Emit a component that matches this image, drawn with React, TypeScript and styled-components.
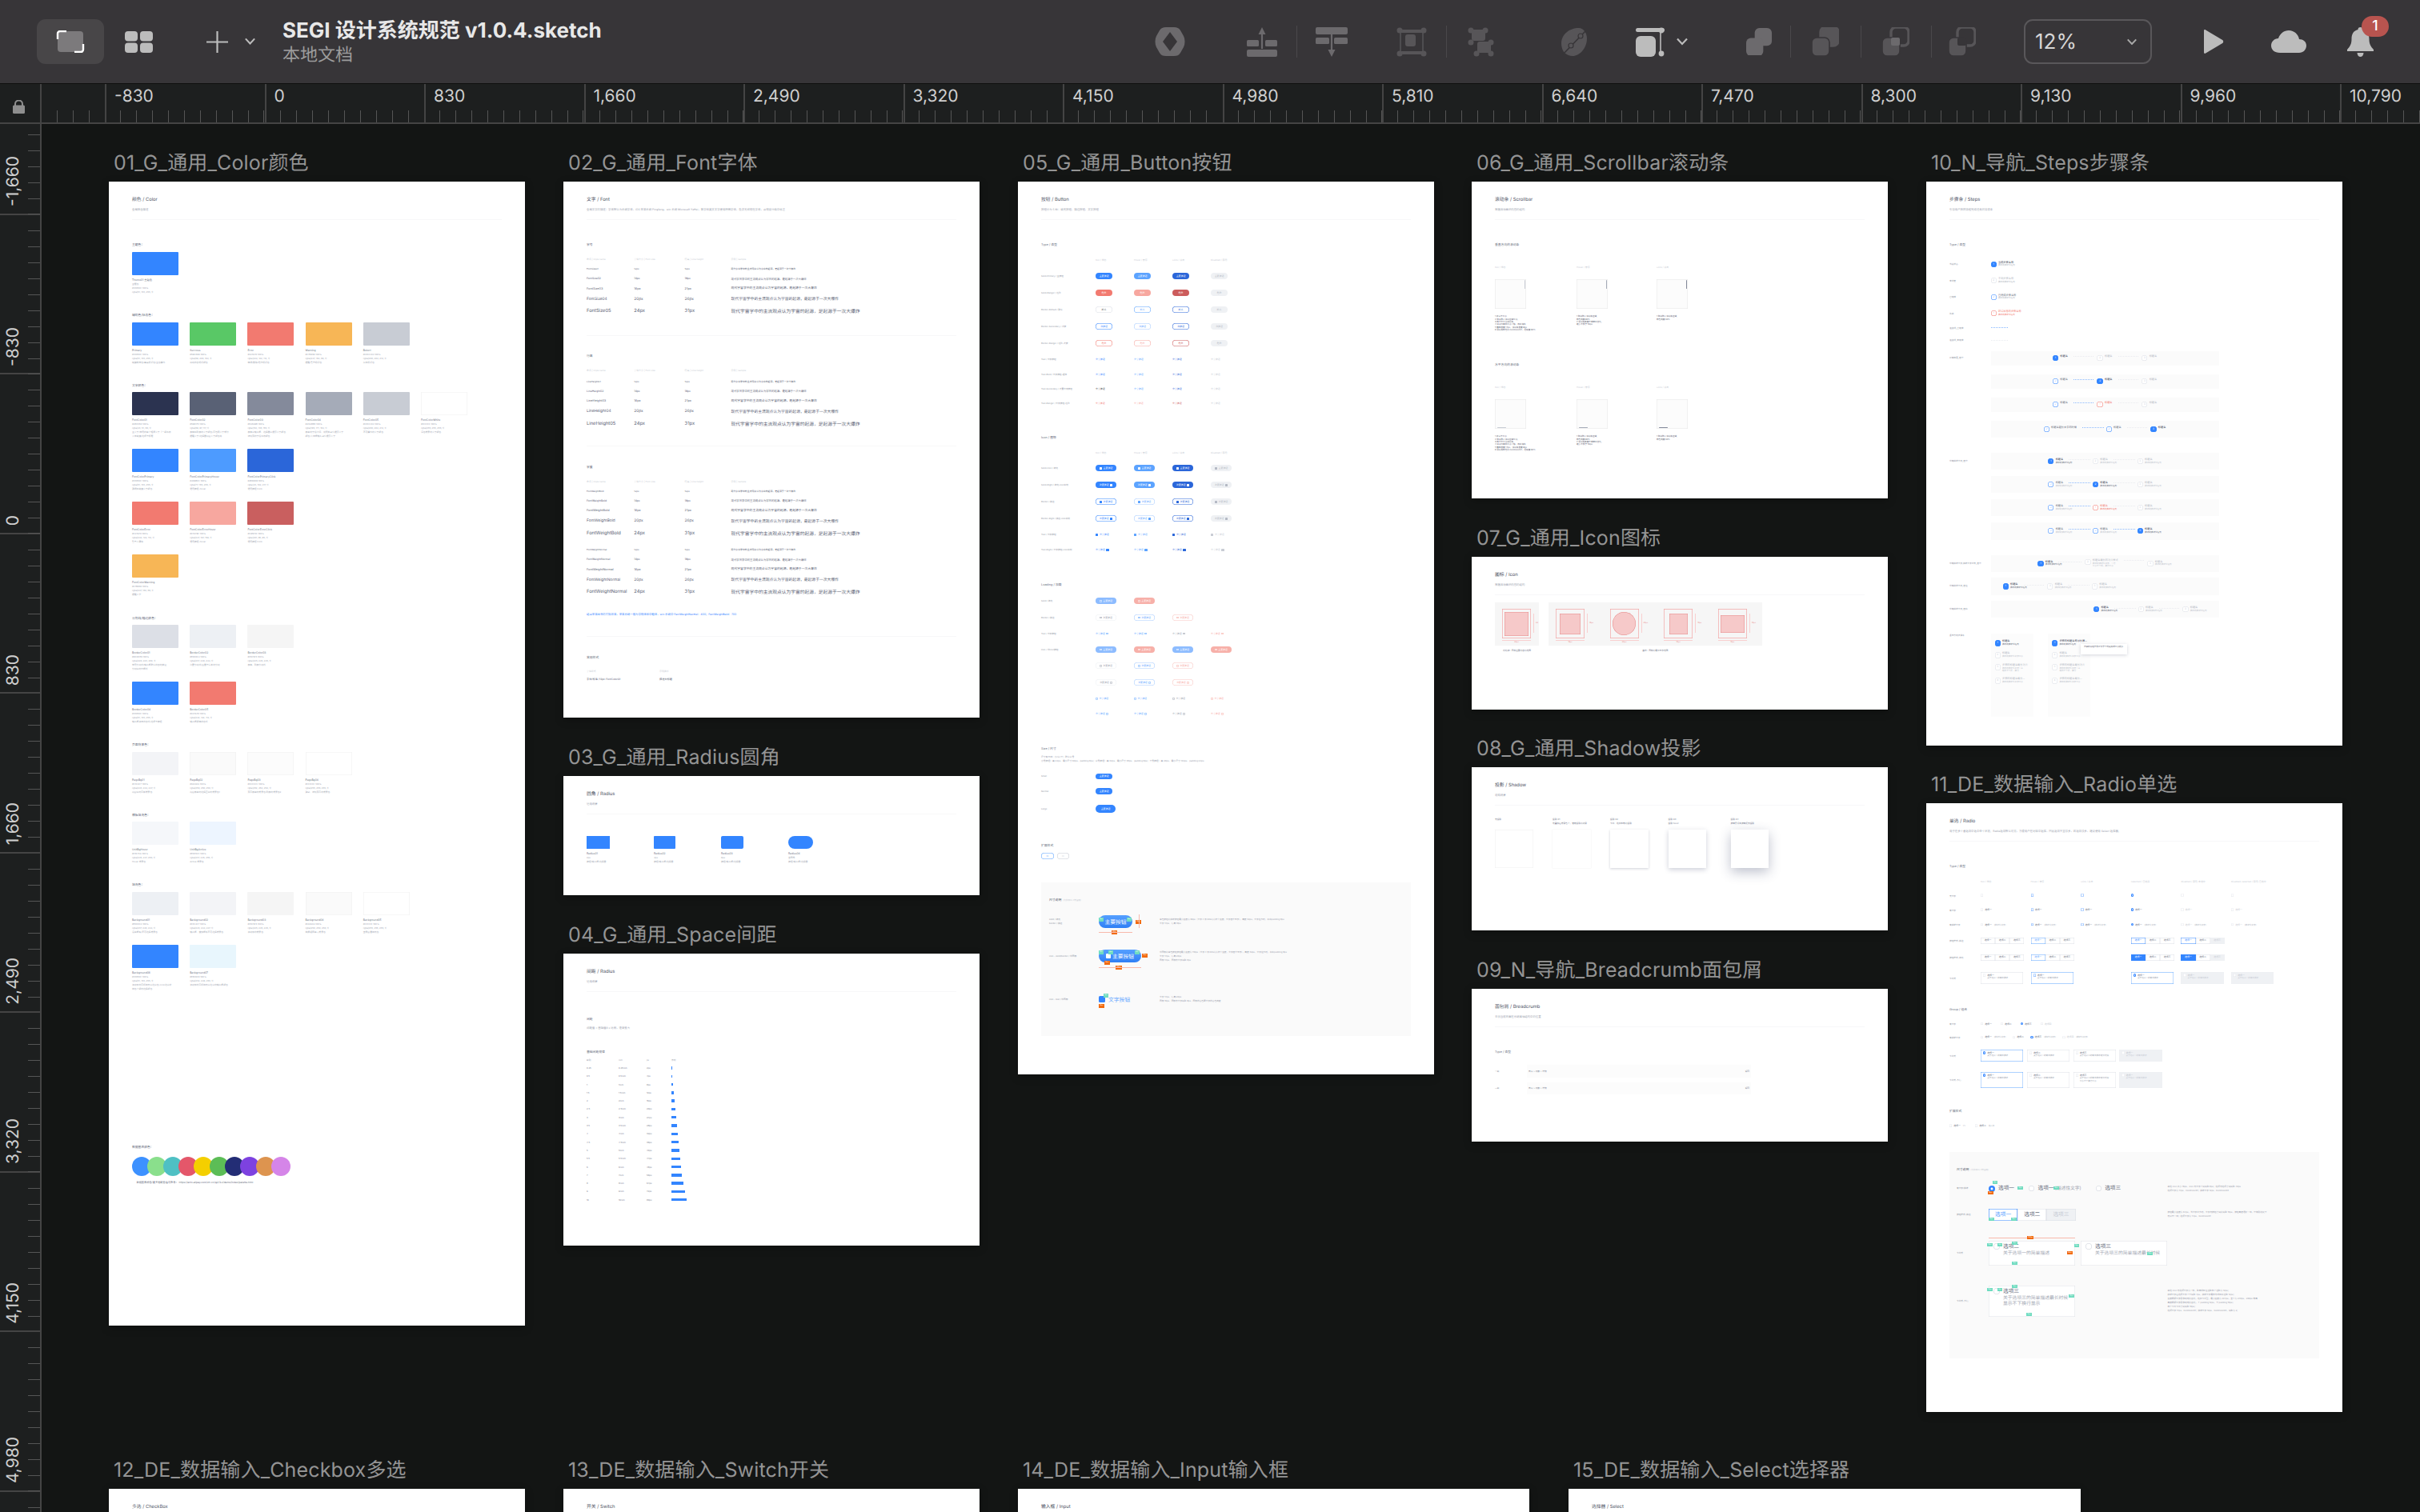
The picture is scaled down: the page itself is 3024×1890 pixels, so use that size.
import React from "react";
import styled, { createGlobalStyle } from "styled-components";

const FONT = `Inter, "Noto Sans CJK SC", "Liberation Sans", sans-serif`;
const BLUE = "#3385ff";
const BLUE_H = "#5ca3ff";
const BLUE_C = "#2b66d9";
const RED = "#f27a70";
const RED_H = "#f7a79f";
const RED_C = "#cc5c5c";
const DIS = "#eff1f4";
const TXT = "#5a6073";
const FAINT = "#c8ccd4";
const GRAY = "#9aa0ad";
const STEP = 199.5;

const Global = createGlobalStyle`
  html, body { margin: 0; width: 3024px; height: 1890px; overflow: hidden; background: #131514; }
  * { box-sizing: border-box; }
  body { font-family: ${FONT}; text-rendering: geometricPrecision; }
`;

const Win = styled.div`
  width: 3024px;
  height: 1890px;
  display: flex;
  flex-direction: column;
  overflow: hidden;
`;

/* toolbar */
const Toolbar = styled.header`
  height: 105px;
  flex: none;
  display: flex;
  align-items: center;
  background: #373538;
  border-bottom: 1px solid #0e0e0e;
  padding: 0 58px 0 46px;
`;

const ActiveBtn = styled.div`
  width: 84px;
  height: 56px;
  border-radius: 11px;
  background: #484648;
  display: flex;
  align-items: center;
  justify-content: center;
  svg { width: 36px; }
`;

const Tool = styled.span<{ $ml: number; $w: number }>`
  flex: none;
  margin-left: ${({ $ml }) => $ml}px;
  width: ${({ $w }) => $w}px;
  display: flex;
  position: relative;
  svg { display: block; width: 100%; height: auto; }
`;

const Sep = styled.i<{ $ml: number }>`
  flex: none;
  width: 1px;
  height: 40px;
  margin-left: ${({ $ml }) => $ml}px;
  background: #4a484b;
`;

const DocName = styled.div`
  flex: 1;
  margin-left: 33px;
  min-width: 0;
  padding-top: 2px;
`;

const DocTitle = styled.div`
  font-size: 26px;
  line-height: 32px;
  font-weight: 700;
  color: #e8e8e8;
`;

const DocSub = styled.div`
  font-size: 22px;
  line-height: 28px;
  color: #9c9c9c;
`;

const ZoomBox = styled.div`
  flex: none;
  margin-left: 60px;
  width: 160px;
  height: 56px;
  border: 2px solid #59575a;
  border-radius: 11px;
  display: flex;
  align-items: center;
  justify-content: space-between;
  padding: 0 16px 0 12px;
  color: #d6d6d6;
  font-size: 26px;
`;

const Badge = styled.b`
  position: absolute;
  left: 18px;
  top: -14px;
  width: 34px;
  height: 26px;
  border-radius: 13px;
  background: #b8544f;
  color: #fff;
  font-size: 18px;
  font-weight: 500;
  line-height: 26px;
  text-align: center;
`;

/* rulers */
const RulerRow = styled.div`
  height: 50px;
  flex: none;
  display: flex;
  background: #1d1f1f;
`;

const Corner = styled.div`
  width: 52px;
  flex: none;
  position: relative;
  z-index: 2;
  background: #1d1f1f;
  border-right: 2px solid #444;
  border-bottom: 2px solid #444;
  display: flex;
  align-items: center;
  justify-content: center;
  padding: 8px 4px 0 0;
  svg { width: 15px; }
`;

const TopTrack = styled.div`
  flex: 1;
  display: flex;
  overflow: hidden;
  border-bottom: 2px solid #444;
`;

const TopSeg = styled.div<{ $first?: boolean }>`
  width: ${STEP}px;
  flex: none;
  margin-left: ${({ $first }) => ($first ? -120.5 : 0)}px;
  border-left: 2px solid #444;
  position: relative;
  color: #cfcfcf;
  font-size: 21px;
  line-height: 30px;
  padding: 1px 0 0 10px;
  &::after {
    content: "";
    position: absolute;
    left: -2px;
    right: 0;
    bottom: 0;
    height: 15px;
    background: repeating-linear-gradient(to right, transparent 0 18.95px, #555 18.95px 19.95px);
  }
`;

const Body = styled.div`
  flex: 1;
  display: flex;
  min-height: 0;
`;

const LeftTrack = styled.div`
  width: 52px;
  flex: none;
  background: #1d1f1f;
  border-right: 2px solid #444;
  overflow: hidden;
`;

const LeftSeg = styled.div<{ $first?: boolean }>`
  height: ${STEP}px;
  margin-top: ${({ $first }) => ($first ? -86 : 0)}px;
  border-bottom: 2px solid #444;
  position: relative;
  &::after {
    content: "";
    position: absolute;
    right: 0;
    top: 0;
    bottom: -2px;
    width: 15px;
    background: repeating-linear-gradient(to bottom, transparent 0 18.95px, #555 18.95px 19.95px);
  }
  span {
    position: absolute;
    left: 4px;
    bottom: 8px;
    writing-mode: vertical-rl;
    transform: rotate(180deg);
    color: #cfcfcf;
    font-size: 21px;
    line-height: 26px;
  }
`;

const Canvas = styled.main`
  flex: 1;
  position: relative;
  overflow: hidden;
  background: #131514;
`;

/* artboards sit at their own spot on the free canvas */
const Frame = styled.section<{ $x: number; $top: number; $w: number }>`
  position: absolute;
  left: ${({ $x }) => $x - 52}px;
  top: ${({ $top }) => $top - 39 - 155}px;
  width: ${({ $w }) => $w}px;
`;

const BoardName = styled.div`
  height: 32px;
  margin-bottom: 7px;
  padding-left: 6px;
  font-size: 25px;
  letter-spacing: 0.15px;
  line-height: 32px;
  color: #949494;
  white-space: nowrap;
`;

const Sheet = styled.div<{ $h: number }>`
  height: ${({ $h }) => $h}px;
  background: #fff;
  padding: 0 29px;
  overflow: hidden;
  box-shadow: 0 3px 10px rgba(0, 0, 0, 0.25);
  color: ${TXT};
`;

const Heading = styled.div`
  padding-top: 19px;
  font-size: 5.8px;
  line-height: 8px;
  color: #4c5263;
  white-space: nowrap;
`;

const Desc = styled.div`
  margin-top: 5.5px;
  font-size: 3.4px;
  line-height: 5px;
  color: ${GRAY};
  white-space: nowrap;
`;

const SizeDesc = styled(Desc)`
  margin-top: 4.7px;
  font-size: 2.8px;
`;

const Rule = styled.div<{ $mt?: number }>`
  margin-top: ${({ $mt }) => $mt ?? 9.5}px;
  height: 1px;
  background: #f8f8f9;
`;

const Title = styled.div<{ $mt: number }>`
  margin-top: ${({ $mt }) => $mt}px;
  font-size: 3.8px;
  line-height: 6px;
  color: #666c7c;
  white-space: nowrap;
`;

const Head = ({ t, d }: { t: string; d: string }) => (
  <>
    <Heading>{t}</Heading>
    <Desc>{d}</Desc>
    <Rule />
  </>
);

/* 01 colour */
const SwatchRow = styled.div<{ $h: number; $mt?: number }>`
  height: ${({ $h }) => $h}px;
  margin-top: ${({ $mt }) => $mt ?? 0}px;
  display: grid;
  grid-template-columns: repeat(6, 58px);
  column-gap: 14.2px;
  align-content: start;
`;

const Swatch = styled.div<{ $c: string; $line?: boolean }>`
  height: 29px;
  border-radius: 1px;
  background: ${({ $c }) => $c};
  box-shadow: ${({ $line }) => ($line ? "inset 0 0 0 0.6px #f0f0f0" : "none")};
`;

const SwatchName = styled.div`
  margin-top: 4px;
  font-size: 3.3px;
  line-height: 5px;
  color: #6a7080;
  white-space: nowrap;
`;

const SwatchLine = styled.div`
  font-size: 2.8px;
  line-height: 5px;
  color: #a3a8b3;
  white-space: nowrap;
`;

const Dots = styled.div`
  margin-top: 9px;
  display: flex;
`;

const Dot = styled.i<{ $c: string }>`
  width: 24px;
  height: 24px;
  border-radius: 50%;
  flex: none;
  background: ${({ $c }) => $c};
  & + & { margin-left: -4.7px; }
`;

const Caption = styled.div`
  margin: 6px 0 0 5.5px;
  font-size: 3.2px;
  line-height: 5px;
  color: #666c7c;
  white-space: nowrap;
`;

type Sw = [string, string, string[], boolean?];
const swatchRows: { title?: string; tm?: number; h: number; items: Sw[] }[] = [
  { title: "主题色：", tm: 28, h: 76.6, items: [["#3385ff", "Theme01 主题色", ["主题色", "#3385FF 100%", "rgba(51, 133, 255, 1)"]]] },
  { title: "辅助色/状态色：", h: 76, items: [
    ["#3385ff", "Primary", ["#3385FF 100%", "rgba(51, 133, 255, 1)", "链接跳转色/高亮标识色/主色操作"]],
    ["#59c866", "Success", ["#59C866 100%", "rgba(89, 200, 102, 1)", "成功状态标识颜色"]],
    ["#f27a70", "Error", ["#F27A70 100%", "rgba(242, 122, 112, 1)", "错误/删除/危险标识色"]],
    ["#f7b656", "Warning", ["#F7B656 100%", "rgba(247, 182, 86, 1)", "提醒/警告标识色"]],
    ["#c8ccd4", "Belect", ["#C8CCD4 100%", "rgba(200, 204, 212, 1)", "失效标识色"]],
  ] },
  { title: "文字颜色：", h: 70.8, items: [
    ["#2b3350", "FontColor01", ["#2B3350 100%", "rgba(43, 51, 80, 1)", "主文字/常用的单个短语文字（一级名称", "文本链接/选项卡标题"]],
    ["#596175", "FontColor02", ["#596175 100%", "rgba(89, 97, 117, 1)", "表格和列表的文字颜色/面包屑文字部分", "提醒文字/选择器内容文字颜色等"]],
    ["#848a9b", "FontColor03", ["#848A9B 100%", "rgba(132, 138, 155, 1)", "表格中输入框、选择器中提示文字颜色", "详情页的字段名称颜色"]],
    ["#a5abb8", "FontColor04", ["#A5ABB8 100%", "rgba(165, 171, 184, 1)", "表单的字段介绍、说明类占位提示文字", "颜色/文本框输入占位提示文字"]],
    ["#c8ccd4", "FontColor05", ["#C8CCD4 100%", "rgba(200, 204, 212, 1)", "不可操作的文字颜色"]],
    ["#ffffff", "FontColorWhite", ["#FFFFFF 100%", "rgba(255, 255, 255, 1)", "深色背景的文字颜色"], true],
  ] },
  { h: 66, items: [
    ["#3385ff", "FontColorPrimary", ["#3385FF 100%", "rgba(51, 133, 255, 1)", "强调和链接文字颜色"]],
    ["#4d9bff", "FontColorPrimaryHover", ["#4D9BFF 100%", "rgba(77, 155, 255, 1)", "通用按钮-hover"]],
    ["#2b66d9", "FontColorPrimaryClick", ["#2B66D9 100%", "rgba(43, 102, 217, 1)", "通用按钮 Click"]],
  ] },
  { h: 66.6, items: [
    ["#f27a70", "FontColorError", ["#F27A70 100%", "rgba(242, 122, 112, 1)", "警告文案等"]],
    ["#f7a79f", "FontColorErrorHover", ["#F7A79F 100%", "rgba(247, 167, 159, 1)", "通用按钮-hover"]],
    ["#c95f5f", "FontColorErrorClick", ["#C95F5F 100%", "rgba(201, 95, 95, 1)", "通用按钮 Click"]],
  ] },
  { h: 76.4, items: [["#f7b656", "FontColorWarning", ["#F7B656 100%", "rgba(247, 182, 86, 1)", "提醒文字"]]] },
  { title: "分割线/框边颜色：", h: 70.5, items: [
    ["#dcdfe6", "BorderColor01", ["#DCDFE6 100%", "rgba(220, 223, 230, 1)", "常用分割线/输入框默认状态的描边", "分割块的外框线"]],
    ["#edf0f4", "BorderColor02", ["#EDF0F4 100%", "rgba(237, 240, 244, 1)", "次要分割线/容器卡片类的分割"]],
    ["#f5f5f5", "BorderColor03", ["#F5F5F5 100%", "rgba(245, 245, 245, 1)", "表格、列表分割线"]],
  ] },
  { h: 76.4, items: [
    ["#3385ff", "BorderColor04", ["#3385FF 100%", "rgba(51, 133, 255, 1)", "输入框点击状态线/选项卡按钮"]],
    ["#f27a70", "BorderColor05", ["#F27A70 100%", "rgba(242, 122, 112, 1)", "输入框报错状态线"]],
  ] },
  { title: "页面背景色：", h: 76, items: [
    ["#f3f4f7", "PageBg01", ["#F3F4F7 100%", "rgba(243, 244, 247, 1)", "内容块的面板背景色"]],
    ["#fafafa", "PageBg02", ["#FAFAFA 100%", "rgba(250, 250, 250, 1)", "内容表单的选择区块的背景色1"], true],
    ["#fcfcfc", "PageBg03", ["#FCFCFC 100%", "rgba(252, 252, 252, 1)", "页面表单的背景色/列表的背景色2"], true],
    ["#ffffff", "PageBg04", ["#FFFFFF 100%", "rgba(255, 255, 255, 1)", "弹窗、详情页面的背景色"], true],
  ] },
  { title: "模板填充色：", h: 76, items: [
    ["#f5f7fa", "UnitBgHover", ["#F5F7FA 100%", "rgba(245, 247, 250, 1)", "Hover 背景色"]],
    ["#edf5ff", "UnitBgActive", ["#EDF5FF 100%", "rgba(237, 245, 255, 1)", "Active 背景色"]],
  ] },
  { title: "填充色：", h: 66, items: [
    ["#edf0f4", "Background01", ["#EDF0F4 100%", "rgba(237, 240, 244, 1)", "混合框架/不可选择背景色"]],
    ["#f3f4f7", "Background02", ["#F3F4F7 100%", "rgba(243, 244, 247, 1)", "输入框、搜索框等不可选择背景色"]],
    ["#f5f5f5", "Background03", ["#F5F5F5 100%", "rgba(245, 245, 245, 1)", "滚动条的背景色"]],
    ["#fafafa", "Background04", ["#FAFAFA 100%", "rgba(250, 250, 250, 1)", "数据视图单元背景色"], true],
    ["#ffffff", "Background05", ["#FFFFFF 100%", "rgba(255, 255, 255, 1)", "全局容器填充色"], true],
  ] },
  { h: 250, items: [
    ["#3385ff", "Background06", ["#3385FF 100%", "rgba(51, 133, 255, 1)", "滚动条的面积填充中选中色 /icon选中状", "填色上级的选择颜色"]],
    ["#e8f6fd", "Background07", ["#E8F6FD 100%", "rgba(232, 246, 253, 1)", "滚动条的面积填充中选中的输入框颜色"]],
  ] },
];

const ColorSheet = () => (
  <>
    <Head t="颜色 / Color" d="全局颜色描述" />
    {swatchRows.map((r, i) => (
      <React.Fragment key={i}>
        {r.title && <Title $mt={r.tm ?? 0}>{r.title}</Title>}
        <SwatchRow $h={r.h} $mt={r.title ? 5.5 : 0}>
          {r.items.map(([c, n, ls, line]) => (
            <div key={n}>
              <Swatch $c={c} $line={line} />
              <SwatchName>{n}</SwatchName>
              {ls.map((l) => <SwatchLine key={l}>{l}</SwatchLine>)}
            </div>
          ))}
        </SwatchRow>
      </React.Fragment>
    ))}
    <Title $mt={0}>数据图表颜色：</Title>
    <Dots>
      {["#3d91ff", "#8adf8c", "#4fc0c4", "#e4576a", "#f4cf00", "#5cbd56", "#232d75", "#7d42e0", "#dd944f", "#d585e8"].map((c) => <Dot key={c} $c={c} />)}
    </Dots>
    <Caption>数据图表颜色/更多搭配色值可参考： https://antv.alipay.com/zh-cn/g2/3.x/demo/index/palette.html</Caption>
  </>
);

/* 02 font */
const FontRow = styled.div<{ $h: number; $mt?: number; $size: number; $c?: string }>`
  height: ${({ $h }) => $h}px;
  margin-top: ${({ $mt }) => $mt ?? 0}px;
  display: grid;
  grid-template-columns: 59.3px 63.3px 58px 1fr;
  align-items: center;
  font-size: ${({ $size }) => $size}px;
  color: ${({ $c }) => $c ?? TXT};
  white-space: nowrap;
`;

const Note = styled.div<{ $mt: number }>`
  margin-top: ${({ $mt }) => $mt}px;
  font-size: 3.4px;
  line-height: 5px;
  color: ${BLUE};
  white-space: nowrap;
`;

const SAMPLE = "现代宇宙学中的主流观点认为宇宙的起源，是起源于一次大爆炸";
const fontMeta: [number, number, string, number][] = [
  [2.88, 12, "12px", 16], [3.36, 12, "14px", 18], [3.84, 12, "16px", 21], [4.8, 15, "20px", 26], [5.76, 15, "24px", 31],
];

const FontHeader = ({ mt }: { mt: number }) => (
  <FontRow $h={5} $mt={mt} $size={2.9} $c={FAINT}>
    <span>命名 | Style name</span><span>字体大小 | Font size</span><span>行高 | Line height</span><span>示例 | Sample</span>
  </FontRow>
);

const FontRows = ({ name, mt, names }: { name: string; mt: number; names?: string[] }) => (
  <>
    {fontMeta.map(([s, h, px, lh], i) => (
      <FontRow key={i} $h={h} $mt={i === 0 ? mt : 0} $size={s}>
        <span>{names ? names[i] : `${name}0${i + 1}`}</span><span>{px}</span><span>{lh}px</span><span>{SAMPLE}</span>
      </FontRow>
    ))}
  </>
);

const StyleRow = styled.div<{ $mt: number; $c?: string; $size: number }>`
  margin-top: ${({ $mt }) => $mt}px;
  display: grid;
  grid-template-columns: 91px 1fr;
  font-size: ${({ $size }) => $size}px;
  line-height: 5px;
  color: ${({ $c }) => $c ?? TXT};
  white-space: nowrap;
`;

const FontSheet = () => (
  <>
    <Head t="文字 / Font" d="全局文字的描述：字体默认为系统字体，iOS 苹果系统 Pingfang，win 系统 Microsoft YaHei，数字和英文文字使用特殊字体，能求无歧视性字体，合规设计稿中标注" />
    <Title $mt={28}>字号</Title>
    <FontHeader mt={12.5} />
    <FontRows name="FontSize" mt={3.5} />
    <Rule $mt={23} />
    <Title $mt={22.4}>行高</Title>
    <FontHeader mt={12} />
    <FontRows name="LineHeight" mt={5.5} />
    <Rule $mt={20.5} />
    <Title $mt={22.5}>字重</Title>
    <FontHeader mt={12.2} />
    <FontRows name="" mt={3.8} names={Array(5).fill("FontWeightBold")} />
    <FontRows name="" mt={7.4} names={Array(5).fill("FontWeightNormal")} />
    <Note $mt={19}>结合苹果出来的实际效果，苹果系统一般为常规体和中粗体，win 系统中 FontWeightNormal：400；FontWeightBold：700</Note>
    <Rule $mt={23.5} />
    <Title $mt={22.8}>常用样式</Title>
    <StyleRow $mt={12.3} $size={2.9} $c={FAINT}><span>字体样式</span><span>示例描述</span></StyleRow>
    <StyleRow $mt={5.6} $size={3.2}><span>字体/标准 /13px-FontColor01</span><span>描述大标题</span></StyleRow>
  </>
);

/* 03 radius */
const RadiusRow = styled.div`
  margin-top: 27px;
  display: grid;
  grid-template-columns: repeat(4, 84px);
`;

const RadiusBox = styled.div<{ $r: number; $w: number }>`
  width: ${({ $w }) => $w}px;
  height: 16px;
  background: ${BLUE};
  border-radius: ${({ $r }) => $r}px;
`;

const RadiusSheet = () => (
  <>
    <Head t="圆角 / Radius" d="适用场景" />
    <RadiusRow>
      {[["Radius01", "2px", 0, 29], ["Radius02", "4px", 1, 27], ["Radius03", "8px", 2, 28], ["Radius04", "全圆角", 8, 31]].map(([n, v, r, w]) => (
        <div key={n as string}>
          <RadiusBox $r={r as number} $w={w as number} />
          <SwatchName>{n}</SwatchName>
          <SwatchLine>{v}</SwatchLine>
          <SwatchLine>按钮/输入框/选择器</SwatchLine>
        </div>
      ))}
    </RadiusRow>
  </>
);

/* 04 space */
const SpaceRow = styled.div<{ $mt?: number; $c?: string }>`
  height: 10.3px;
  margin-top: ${({ $mt }) => $mt ?? 0}px;
  display: grid;
  grid-template-columns: 40px 35px 31px 1fr;
  align-items: center;
  font-size: 2.7px;
  color: ${({ $c }) => $c ?? "#7c8291"};
  white-space: nowrap;
`;

const SpaceBar = styled.i<{ $w: number }>`
  display: block;
  height: 3.4px;
  width: ${({ $w }) => $w}px;
  background: ${BLUE};
`;

const SPACES = [0.25, 0.5, 1, 1.5, 2, 2.5, 3, 3.5, 4, 4.5, 5, 5.5, 6, 7, 8, 9, 10];
const SpaceSheet = () => (
  <>
    <Head t="间距 / Radius" d="适用场景" />
    <Title $mt={31}>间距</Title>
    <Desc>间距值 = 基础值8 x 比例，逐渐变大</Desc>
    <Title $mt={24}>基础间距规律</Title>
    <SpaceRow $mt={2} $c={GRAY}><span>级别</span><span>rem</span><span>px</span><span>示例</span></SpaceRow>
    {SPACES.map((n) => (
      <SpaceRow key={n}>
        <span>{n}</span><span>{n}rem</span><span>{n * 8}px</span><SpaceBar $w={Math.max(1, n * 1.92)} />
      </SpaceRow>
    ))}
  </>
);

/* 05 button */
const BtnRow = styled.div<{ $h: number; $mt?: number }>`
  height: ${({ $h }) => $h}px;
  margin-top: ${({ $mt }) => $mt ?? 0}px;
  display: grid;
  grid-template-columns: 68px 48px 48px 48px 48px;
  align-items: center;
  font-size: 2.7px;
  color: #8f95a3;
  white-space: nowrap;
`;

const HeadCell = styled.span`
  font-size: 2.9px;
  color: ${FAINT};
`;

const Btn = styled.span<{ $bg?: string; $fg: string; $bd?: string; $wd: number; $ht: number }>`
  width: ${({ $wd }) => $wd}px;
  height: ${({ $ht }) => $ht}px;
  display: inline-flex;
  align-items: center;
  justify-content: center;
  gap: 1.4px;
  font-size: 2.9px;
  color: ${({ $fg }) => $fg};
  background: ${({ $bg }) => $bg ?? "transparent"};
  box-shadow: ${({ $bd }) => ($bd ? `inset 0 0 0 0.5px ${$bd}` : "none")};
  border-radius: ${({ $ht }) => $ht}px;
`;

const Bare = styled.span<{ $fg: string }>`
  display: inline-flex;
  align-items: center;
  gap: 1.6px;
  font-size: 2.9px;
  color: ${({ $fg }) => $fg};
`;

const Ico = styled.i<{ $c: string }>`
  width: 3.4px;
  height: 2.8px;
  border-radius: 0.5px;
  flex: none;
  background: ${({ $c }) => $c};
`;

const Spin = styled.i<{ $c: string }>`
  width: 2.8px;
  height: 2.8px;
  box-shadow: inset 0 0 0 0.4px ${({ $c }) => $c};
  border-radius: 50%;
  flex: none;
`;

type Cell = { bg?: string; fg: string; bd?: string } | null;
const W = "#fff";
const disSolid: Cell = { bg: DIS, fg: "#b4b9c4" };
const primary: Cell[] = [{ bg: BLUE, fg: W }, { bg: BLUE_H, fg: W }, { bg: BLUE_C, fg: W }, disSolid];
const danger: Cell[] = [{ bg: RED, fg: W }, { bg: RED_H, fg: W }, { bg: RED_C, fg: W }, disSolid];
const defBorder: Cell[] = [{ bg: W, fg: "#555", bd: "#dcdfe6" }, { bg: W, fg: BLUE_H, bd: BLUE_H }, { bg: W, fg: BLUE_C, bd: BLUE_C }, disSolid];
const secBorder: Cell[] = [{ bg: W, fg: BLUE, bd: BLUE }, { bg: W, fg: BLUE_H, bd: "#a8ccff" }, { bg: W, fg: BLUE_C, bd: BLUE_C }, disSolid];
const dangerBorder: Cell[] = [{ bg: W, fg: RED, bd: RED }, { bg: W, fg: RED_H, bd: RED_H }, { bg: W, fg: RED_C, bd: RED_C }, disSolid];
const textBlue: Cell[] = [{ fg: BLUE }, { fg: BLUE_H }, { fg: BLUE_C }, { fg: "#c8ccd4" }];

type BRow = { label: string; h: number; cells: Cell[]; text: string; bare?: boolean; wd?: number; ht?: number; left?: boolean; right?: boolean; spin?: boolean; soft?: boolean; mt?: number };
const typeRows: BRow[] = [
  { label: "Solid-Primary / 主按钮", h: 21, cells: primary, text: "主要按钮" },
  { label: "Solid-Danger / 危险", h: 21, cells: danger, text: "危险" },
  { label: "Border-Default / 默认", h: 21, cells: defBorder, text: "默认" },
  { label: "Border-Secondary / 次按", h: 21, cells: secBorder, text: "次按钮" },
  { label: "Border-Danger / 危险-次按", h: 21, cells: dangerBorder, text: "危险" },
  { label: "Text / 文字按钮", h: 18.4, mt: 1, cells: textBlue, text: "文字按钮", bare: true },
  { label: "Text-Bold / 文字按钮-粗体", h: 18.4, cells: textBlue, text: "文字按钮", bare: true },
  { label: "Text-Secondary / 次要文字按钮", h: 18.4, cells: [{ fg: "#444" }, { fg: BLUE_H }, { fg: BLUE_C }, { fg: "#c8ccd4" }], text: "文字按钮", bare: true },
  { label: "Text-Danger / 文字按钮-危险", h: 18.4, cells: [{ fg: RED }, { fg: RED_H }, { fg: RED_C }, { fg: "#c8ccd4" }], text: "文字按钮", bare: true },
];
const iconRows: BRow[] = [
  { label: "Solid-Icon / 填充", h: 21, cells: primary, text: "主要按钮", wd: 26, left: true },
  { label: "Solid-Right / 填充-icon右侧", h: 21, cells: primary, text: "次要按钮", wd: 26, right: true },
  { label: "Border / 描边", h: 21, cells: secBorder, text: "次要按钮", wd: 26, left: true },
  { label: "Border-Right / 描边-icon右侧", h: 21, cells: secBorder, text: "次要按钮", wd: 26, right: true },
  { label: "Text / 文字按钮", h: 19, cells: textBlue, text: "文字按钮", bare: true, left: true },
  { label: "Text-Right / 文字按钮-icon右侧", h: 19, cells: textBlue, text: "文字按钮", bare: true, right: true },
];
const softBlue: Cell = { bg: "#8dbcff", fg: W };
const softRed: Cell = { bg: "#f7b0a9", fg: W };
const softLine: Cell = { bg: W, fg: GRAY, bd: "#edf0f4" };
const softLineB: Cell = { bg: W, fg: BLUE_H, bd: "#a8ccff" };
const softLineR: Cell = { bg: W, fg: RED_H, bd: "#f9c6c1" };
const softText: Cell[] = [{ fg: BLUE_H }, { fg: BLUE_H }, { fg: GRAY }, { fg: RED_H }];
const loadRows: BRow[] = [
  { label: "Solid / 填充", h: 21, cells: [softBlue, softRed, null, null], text: "主要按钮", wd: 26, left: true, spin: true },
  { label: "Border / 描边", h: 20, cells: [softLine, softLineB, softLineR, null], text: "次要按钮", wd: 26, left: true, spin: true },
  { label: "Text / 文字按钮", h: 20, cells: softText, text: "文字按钮", bare: true, right: true, spin: true },
  { label: "Icon / 带icon按钮", h: 20, cells: [softBlue, softRed, softBlue, softRed], text: "主要按钮", wd: 26, left: true, spin: true },
  { label: "", h: 21, cells: [softLine, softLineB, softLineR, null], text: "次要按钮", wd: 26, left: true, spin: true },
  { label: "", h: 21, cells: [softLine, softLineB, softLineR, null], text: "次要按钮", wd: 26, right: true, spin: true },
  { label: "", h: 19, cells: softText, text: "文字按钮", bare: true, left: true, spin: true },
  { label: "", h: 19, cells: softText, text: "文字按钮", bare: true, right: true, spin: true },
];

const renderCell = (c: Cell, r: BRow, i: number) => {
  if (!c) return <span key={i} />;
  const mark = (color: string) => (r.spin ? <Spin $c={color} /> : <Ico $c={color} />);
  const inner = (color: string) => (
    <>
      {r.left && mark(color)}
      <span>{r.text}</span>
      {r.right && mark(color)}
    </>
  );
  if (r.bare) return <span key={i}><Bare $fg={c.fg}>{inner(c.fg === "#444" ? BLUE : c.fg)}</Bare></span>;
  return <span key={i}><Btn $bg={c.bg} $fg={c.fg} $bd={c.bd} $wd={r.wd ?? 21} $ht={r.ht ?? 8}>{inner(c.fg)}</Btn></span>;
};

const BtnTable = ({ rows, mt, header }: { rows: BRow[]; mt: number; header?: boolean }) => (
  <>
    {header && (
      <BtnRow $h={5} $mt={13.5}>
        <span />
        <HeadCell>Nor / 常态</HeadCell><HeadCell>Hover / 悬停</HeadCell><HeadCell>Click / 点击</HeadCell><HeadCell>Disabled / 禁用</HeadCell>
      </BtnRow>
    )}
    {rows.map((r, i) => (
      <BtnRow key={i} $h={r.h} $mt={i === 0 ? mt : r.mt ?? 0}>
        <span>{r.label}</span>
        {r.cells.map((c, j) => renderCell(c, r, j))}
      </BtnRow>
    ))}
  </>
);

const Chips = styled.div`
  margin-top: 6px;
  display: flex;
  gap: 4px;
`;

const Chip = styled.span<{ $c: string }>`
  width: 15.5px;
  height: 8px;
  box-shadow: inset 0 0 0 0.5px ${({ $c }) => $c};
  border-radius: 4px;
  font-size: 2.6px;
  line-height: 8px;
  text-align: center;
  color: ${({ $c }) => $c};
`;

const SpecPanel = styled.div<{ $mt: number; $h: number; $pad: number }>`
  margin-top: ${({ $mt }) => $mt}px;
  height: ${({ $h }) => $h}px;
  background: #fafafa;
  padding: 19px ${({ $pad }) => $pad}px 0;
`;

const SpecTitle = styled.div`
  font-size: 3.8px;
  line-height: 6px;
  color: #4c5263;
  small { font-size: 2.6px; color: ${FAINT}; margin-left: 1px; }
`;

const SpecRow = styled.div<{ $h: number; $cols: string; $mt?: number }>`
  height: ${({ $h }) => $h}px;
  margin-top: ${({ $mt }) => $mt ?? 0}px;
  display: grid;
  grid-template-columns: ${({ $cols }) => $cols};
  align-items: center;
  font-size: 2.7px;
  line-height: 5px;
  color: #8f95a3;
`;

const SpecText = styled.div`
  font-size: 2.7px;
  line-height: 5px;
  color: #9aa0ad;
  white-space: nowrap;
`;

const Annot = styled.div<{ $w?: number }>`
  position: relative;
  width: ${({ $w }) => ($w ? `${$w}px` : "max-content")};
`;

const BigBtn = styled.div<{ $w: number }>`
  width: ${({ $w }) => $w}px;
  height: 16px;
  border-radius: 8px;
  background: linear-gradient(#56a0ff, #2f7ff5);
  color: #fff;
  font-size: 6.8px;
  display: flex;
  align-items: center;
  justify-content: center;
  gap: 2px;
  white-space: nowrap;
  overflow: hidden;
`;

const WhiteIco = styled.i`
  width: 6px;
  height: 6px;
  border-radius: 1px;
  background: #fff;
`;

const Tag = styled.span<{ $x: number; $y: number; $o?: boolean }>`
  position: absolute;
  left: ${({ $x }) => $x}px;
  top: ${({ $y }) => $y}px;
  padding: 0 1.2px;
  height: 4.6px;
  font-size: 2px;
  line-height: 4.6px;
  color: #fff;
  background: ${({ $o }) => ($o ? "#f26a0f" : "#6fdcc0")};
  white-space: nowrap;
`;

const DimLine = styled.i<{ $x: number; $y: number; $w?: number; $h?: number }>`
  position: absolute;
  left: ${({ $x }) => $x}px;
  top: ${({ $y }) => $y}px;
  width: ${({ $w }) => $w ?? 0.6}px;
  height: ${({ $h }) => $h ?? 0.6}px;
  background: #f7b9ab;
`;

const LinkBtn = styled.div`
  display: flex;
  align-items: center;
  gap: 4px;
  font-size: 6.8px;
  color: ${BLUE_H};
  white-space: nowrap;
  i { width: 8px; height: 8px; border-radius: 1.5px; background: ${BLUE}; }
`;

const BTN_COLS = "62px 76px 1fr";
const ButtonSheet = () => (
  <>
    <Head t="按钮 / Button" d="按钮分为 5 种：填充按钮、描边按钮、文字按钮" />
    <Title $mt={28}>Type / 类型</Title>
    <BtnTable rows={typeRows} mt={6.5} header />
    <Title $mt={30.4}>Icon / 图标</Title>
    <BtnTable rows={iconRows} mt={6.5} header />
    <Title $mt={31}>Loading / 加载</Title>
    <BtnTable rows={loadRows} mt={7} />
    <Title $mt={31.3}>Size / 尺寸</Title>
    <SizeDesc>尺寸有三种：小/中/大；默认中号<br />小号按钮：高 24px、最小尺寸 60px、padding:8px；中号按钮：高 32px、最小尺寸 88px、padding:8px；大号按钮：高 40px、最小尺寸 104px、padding:24px</SizeDesc>
    <BtnRow $h={19} $mt={7}><span>Small</span>{renderCell(primary[0], { label: "", h: 19, cells: [], text: "主要按钮", ht: 6.5 }, 0)}</BtnRow>
    <BtnRow $h={19}><span>Normal</span>{renderCell(primary[0], { label: "", h: 19, cells: [], text: "主要按钮" }, 0)}</BtnRow>
    <BtnRow $h={25}><span>Large</span>{renderCell(primary[0], { label: "", h: 25, cells: [], text: "主要按钮", wd: 25, ht: 10 }, 0)}</BtnRow>
    <Title $mt={30.5}>扩展样式</Title>
    <Chips><Chip $c={BLUE_H}>图</Chip><Chip $c="#c8ccd4">图</Chip></Chips>
    <SpecPanel $mt={28.7} $h={192.3} $pad={10}>
      <SpecTitle>尺寸说明 <small>(为按照2x 2倍呈现)</small></SpecTitle>
      <SpecRow $h={36} $cols={BTN_COLS} $mt={6}>
        <div>solid / 填充<br />border / 描边</div>
        <Annot $w={42}>
          <BigBtn $w={42}>主要按钮</BigBtn>
          <Tag $x={0} $y={3}>8px</Tag>
          <Tag $x={35} $y={3}>8px</Tag>
          <Tag $x={46} $y={6} $o>32px</Tag>
          <Tag $x={16} $y={19} $o>48px</Tag>
          <DimLine $x={0} $y={21} $w={42} />
          <DimLine $x={50} $y={-1} $h={17} />
        </Annot>
        <SpecText>单色按钮的描述按钮最小宽度为 60px（文字 4 字/iOS均为该个宽度，文字居中显示），高度 32px，文字往多时，右右padding:8px<br />文字 14px、行高 18px</SpecText>
      </SpecRow>
      <SpecRow $h={50} $cols={BTN_COLS}>
        <div>icon - solid/border / 带图标</div>
        <Annot $w={53}>
          <BigBtn $w={53}><WhiteIco />主要按钮</BigBtn>
          <Tag $x={0} $y={1}>8px</Tag>
          <Tag $x={12} $y={1}>4px</Tag>
          <Tag $x={45} $y={1}>8px</Tag>
          <Tag $x={54} $y={5} $o>32px</Tag>
          <Tag $x={7} $y={14} $o>14px</Tag>
          <Tag $x={21} $y={20} $o>108px</Tag>
          <DimLine $x={0} $y={22} $w={53} />
        </Annot>
        <SpecText>带图标的单色按钮按钮最小宽度为 110px（文字 4 字/iOS均为该个宽度，文字居中显示），高度 32px，文字往多时，右右padding:8px<br />文字 14px、行高 20px<br />图标 14px、图标与文字间距 8px</SpecText>
      </SpecRow>
      <SpecRow $h={58} $cols={BTN_COLS}>
        <div>icon - text / 带图标</div>
        <Annot>
          <LinkBtn><i />文字按钮</LinkBtn>
          <Tag $x={6} $y={-3}>4px</Tag>
          <Tag $x={0} $y={10} $o>16px</Tag>
        </Annot>
        <SpecText>文字 14px、行高 20px<br />图标 16px、图标与文字间距 8px、图标状态色跟文字状态色改变</SpecText>
      </SpecRow>
    </SpecPanel>
  </>
);

/* 06 scrollbar */
const ScrollGroup = styled.div<{ $h: number; $mt?: number }>`
  height: ${({ $h }) => $h}px;
  margin-top: ${({ $mt }) => $mt ?? 0}px;
  display: grid;
  grid-template-columns: 102px 100px 100px;
  align-content: start;
`;

const ScrollBox = styled.div`
  margin-top: 9.7px;
  width: 39px;
  height: 37.5px;
  position: relative;
  background: #fcfcfc;
  box-shadow: inset 0 0 0 0.5px #e6e6e6;
`;

const Thumb = styled.i<{ $v: boolean; $c: string }>`
  position: absolute;
  ${({ $v }) => ($v ? "right: 1px; top: 1px; width: 1.5px; height: 11px;" : "left: 3px; bottom: 1px; height: 1.5px; width: 11px;")}
  border-radius: 1px;
  background: ${({ $c }) => $c};
`;

const SmallNote = styled.div`
  margin-top: 8px;
  font-size: 2.6px;
  line-height: 3.4px;
  color: #5f6575;
  white-space: nowrap;
`;

const scrollTexts = [
  ["1.默认不显示", "2.鼠标移入滚动区域显示,", "3.离开不显示滚动条", "4.滚动结束后显示 1 秒，向右消失", "5.整体宽度 14px，滚动条宽度 8px", "6.滚动条颜色为 FontColor04，透明度 60%"],
  ["1.鼠标移入滚动条区域,", "颜色亮度 80%", "2.滚动条高度不随窗口变化,", "最小不低于 50px"],
  ["1.鼠标移入滚动条区域,", "颜色亮度 90%"],
];

const ScrollCols = ({ v }: { v: boolean }) => (
  <>
    {["Nor / 常态", "Hover / 悬停", "Click / 点击"].map((h, i) => (
      <div key={h}>
        <HeadCell>{h}</HeadCell>
        <ScrollBox><Thumb $v={v} $c={["#c8ccd4", "#a5abb8", "#848a9b"][i]} /></ScrollBox>
        <SmallNote>{scrollTexts[i].map((t) => <div key={t}>{t}</div>)}</SmallNote>
      </div>
    ))}
  </>
);

const ScrollSheet = () => (
  <>
    <Head t="滚动条 / Scrollbar" d="根据滚动面积内容的结构" />
    <Title $mt={28}>垂直方向的滚动条</Title>
    <ScrollGroup $h={134} $mt={10}><ScrollCols v /></ScrollGroup>
    <Title $mt={0}>水平方向的滚动条</Title>
    <ScrollGroup $h={80} $mt={10}><ScrollCols v={false} /></ScrollGroup>
  </>
);

/* 07 icon */
const IconStrip = styled.div`
  margin-top: 9px;
  display: flex;
  gap: 12px;
`;

const IconPanel = styled.div<{ $w: number }>`
  width: ${({ $w }) => $w}px;
  height: 54px;
  padding: 8px 0 0 9px;
  display: flex;
  background-color: #f6f6f6;
  background-image: linear-gradient(#f0e8e8 0.4px, transparent 0.4px), linear-gradient(90deg, #f0e8e8 0.4px, transparent 0.4px);
  background-size: 2px 2px;
`;

const IconCell = styled.div`
  width: 67.6px;
  flex: none;
  position: relative;
`;

const Outer = styled.div`
  width: 36px;
  height: 37px;
  box-shadow: inset 0 0 0 0.7px #f2a8a8;
  display: flex;
  align-items: center;
  justify-content: center;
`;

const Inner = styled.div<{ $w: number; $h: number; $round?: boolean }>`
  width: ${({ $w }) => $w}px;
  height: ${({ $h }) => $h}px;
  box-shadow: inset 0 0 0 0.5px #e58c8c;
  background: #f6c9c9;
  border-radius: ${({ $round }) => ($round ? "50%" : "0")};
`;

const DimV = styled.span`
  position: absolute;
  left: 39px;
  top: 6px;
  height: 24px;
  border-left: 1px solid #f9d0d0;
  padding-left: 2px;
  font-size: 2.4px;
  line-height: 24px;
  color: #e98b8b;
  white-space: nowrap;
`;

const DimH = styled.span`
  position: absolute;
  left: 0;
  top: 39px;
  width: 36px;
  border-top: 1px solid #f9d0d0;
  font-size: 2.4px;
  line-height: 4px;
  text-align: center;
  color: #e98b8b;
`;

const IconCaps = styled.div`
  margin-top: 4px;
  display: flex;
  gap: 12px;
  font-size: 2.7px;
  line-height: 5px;
  color: #7a8090;
`;

const IconCap = styled.span<{ $w: number }>`
  width: ${({ $w }) => $w}px;
  text-align: center;
  white-space: nowrap;
`;

const IconSheet = () => (
  <>
    <Head t="图标 / Icon" d="根据滚动面积内容的结构" />
    <IconStrip>
      <IconPanel $w={55}>
        <IconCell><Outer><Inner $w={30} $h={30} /></Outer><DimV>24</DimV><DimH>24px</DimH></IconCell>
      </IconPanel>
      <IconPanel $w={266.5}>
        {[[26, 26, false, "16px"], [29, 29, true, "20px"], [23, 26, false, "16px"], [30, 22, false, "16px"]].map(([w, h, r, t], i) => (
          <IconCell key={i}>
            <Outer><Inner $w={w as number} $h={h as number} $round={r as boolean} /></Outer>
            <DimV>{t}</DimV><DimH>{t}</DimH>
          </IconCell>
        ))}
      </IconPanel>
    </IconStrip>
    <IconCaps>
      <IconCap $w={55}>内轮廓：图标主要内容的范围</IconCap>
      <IconCap $w={266.5}>基线：图标的最佳显示范围</IconCap>
    </IconCaps>
  </>
);

/* 08 shadow */
const ShadowRow = styled.div`
  margin-top: 14.5px;
  display: grid;
  grid-template-columns: 72px 72px 72.5px 78px 60px;
`;

const ShadowCap = styled.div`
  height: 10px;
  font-size: 2.7px;
  line-height: 5px;
  color: #7a8090;
  white-space: nowrap;
`;

const ShadowCard = styled.div<{ $s: string }>`
  margin-top: 5.5px;
  width: 47.5px;
  height: 48px;
  background: #fff;
  box-shadow: ${({ $s }) => $s};
`;

const shadows = [
  ["无投影", "", "inset 0 0 0 0.5px #efefef"],
  ["投影-01", "可叠加在背景色上，使用投影的场景", "0 0 1px rgba(40,50,80,.14)"],
  ["投影-02", "卡片、选择框等的投影", "0 1px 3px rgba(40,50,80,.22)"],
  ["投影-03", "投影 hover", "0 2px 6px rgba(40,50,90,.24)"],
  ["投影-04", "弹窗悬浮类弹窗提示投影", "0 5px 14px rgba(40,50,90,.3)"],
];

const ShadowSheet = () => (
  <>
    <Head t="投影 / Shadow" d="说明场景" />
    <ShadowRow>
      {shadows.map(([a, b, s]) => (
        <div key={a}>
          <ShadowCap>{a}<br />{b}</ShadowCap>
          <ShadowCard $s={s} />
        </div>
      ))}
    </ShadowRow>
  </>
);

/* 09 breadcrumb */
const CrumbRow = styled.div<{ $mt: number }>`
  margin-top: ${({ $mt }) => $mt}px;
  display: grid;
  grid-template-columns: 40px 280px;
  align-items: center;
  font-size: 2.7px;
  color: #8f95a3;
`;

const CrumbBar = styled.div`
  height: 15.5px;
  background: #fcfcfc;
  display: flex;
  align-items: center;
  justify-content: space-between;
  padding: 0 2px;
  font-size: 2.7px;
  color: #7a8090;
`;

const CrumbSheet = () => (
  <>
    <Head t="面包屑 / Breadcrumb" d="显示当前页面在系统层级结构中的位置" />
    <Title $mt={28}>Type / 类型</Title>
    <CrumbRow $mt={13}><span>一级</span><CrumbBar><span>首页 &gt; 列表 &gt; 详情</span><span>返回</span></CrumbBar></CrumbRow>
    <CrumbRow $mt={6}><span>二级</span><CrumbBar><span>首页 &gt; 列表 &gt; 详情</span><span>返回</span></CrumbBar></CrumbRow>
  </>
);

/* 10 steps */
const StepLine = styled.div<{ $h: number; $mt?: number }>`
  height: ${({ $h }) => $h}px;
  margin-top: ${({ $mt }) => $mt ?? 0}px;
  display: grid;
  grid-template-columns: 51.5px 1fr;
  align-items: center;
  font-size: 2.7px;
  color: #8f95a3;
  white-space: nowrap;
`;

const StepGroup = styled.div<{ $mt: number }>`
  margin-top: ${({ $mt }) => $mt}px;
  display: grid;
  grid-template-columns: 51.5px 285px;
  font-size: 2.7px;
  color: #8f95a3;
  white-space: nowrap;
`;

const GroupLabel = styled.div<{ $top: number }>`
  padding-top: ${({ $top }) => $top}px;
  line-height: 5px;
`;

const StepStack = styled.div<{ $gap: number }>`
  display: flex;
  flex-direction: column;
  gap: ${({ $gap }) => $gap}px;
`;

const StepPanel = styled.div<{ $h: number; $j?: string }>`
  height: ${({ $h }) => $h}px;
  background: #fbfbfb;
  display: flex;
  align-items: center;
  justify-content: ${({ $j }) => $j ?? "center"};
  padding: 0 15px;
`;

const StepItem = styled.div<{ $w?: number }>`
  flex: none;
  width: ${({ $w }) => ($w ? `${$w}px` : "auto")};
  display: flex;
  gap: 2.2px;
  align-items: flex-start;
`;

const StepCircle = styled.i<{ $s: string }>`
  flex: none;
  width: 7.3px;
  height: 7.3px;
  border-radius: 50%;
  font-style: normal;
  font-size: 3px;
  line-height: 7.3px;
  text-align: center;
  background: ${({ $s }) => ($s === "cur" ? BLUE : "#fff")};
  color: ${({ $s }) => ($s === "cur" ? "#fff" : $s === "done" ? BLUE : $s === "err" ? RED : FAINT)};
  box-shadow: inset 0 0 0 0.5px ${({ $s }) => ($s === "cur" || $s === "done" ? BLUE : $s === "err" ? RED : "#dcdfe6")};
`;

const StepBody = styled.div`
  flex: 1;
  min-width: 0;
`;

const StepHead = styled.div<{ $c: string }>`
  display: flex;
  align-items: center;
  gap: 3px;
  font-size: 3.2px;
  line-height: 3.8px;
  color: ${({ $c }) => $c};
  white-space: nowrap;
`;

const Conn = styled.i<{ $on: boolean }>`
  flex: 1;
  margin: 0 3px 0 4px;
  height: 1px;
  opacity: 0.55;
  background: repeating-linear-gradient(to right, ${({ $on }) => ($on ? BLUE : "#dcdfe6")} 0 1px, transparent 1px 2px);
`;

const StepSub = styled.div<{ $c: string }>`
  font-size: 2.6px;
  line-height: 3.4px;
  color: ${({ $c }) => $c};
  white-space: pre;
`;

const ConnAlone = styled.i<{ $on: boolean }>`
  display: block;
  width: 21px;
  height: 1px;
  opacity: 0.6;
  background: repeating-linear-gradient(to right, ${({ $on }) => ($on ? BLUE : "#dcdfe6")} 0 1px, transparent 1px 2px);
`;

type St = { s: string; t: string; sub?: string; w?: number; on?: boolean };
const tone = (s: string) => (s === "cur" ? "#3a4052" : s === "done" ? "#6a7080" : s === "err" ? RED : "#b4b9c4");
const glyph = (s: string, n: number) => (s === "done" ? "✓" : s === "err" ? "!" : String(n));

const StepView = ({ x, n, last }: { x: St; n: number; last: boolean }) => (
  <StepItem $w={last ? undefined : x.w ?? 55.7}>
    <StepCircle $s={x.s}>{glyph(x.s, n)}</StepCircle>
    <StepBody>
      <StepHead $c={tone(x.s)}><span>{x.t}</span>{!last && <Conn $on={!!x.on} />}</StepHead>
      {x.sub && <StepSub $c={x.s === "cur" ? "#6a7080" : x.s === "err" ? RED : "#c0c4cd"}>{x.sub}</StepSub>}
    </StepBody>
  </StepItem>
);

const SUB = "描述的描述性短句";
const makeSteps = (states: string[], sub: boolean): St[] => states.map((s) => ({ s, t: "标题名", sub: sub ? SUB : undefined, on: s === "done" }));
const StepsRow = ({ items, h, j }: { items: St[]; h: number; j?: string }) => (
  <StepPanel $h={h} $j={j}>
    {items.map((x, i) => <StepView key={i} x={x} n={i + 1} last={i === items.length - 1} />)}
  </StepPanel>
);

const StateLine = ({ label, s, t, mt }: { label: string; s: string; t: string; mt?: number }) => (
  <StepLine $h={20.5} $mt={mt}>
    <span>{label}</span>
    <StepItem>
      <StepCircle $s={s}>{glyph(s, s === "cur" ? 1 : 2)}</StepCircle>
      <StepBody>
        <StepHead $c={tone(s)}>{t}</StepHead>
        <StepSub $c={s === "err" ? RED : "#b4b9c4"}>{SUB}</StepSub>
      </StepBody>
    </StepItem>
  </StepLine>
);

const VList = styled.div`
  width: 53px;
  height: 104px;
  background: #fcfcfc;
  padding: 8px 0 0 5px;
`;

const VItem = styled.div<{ $h: number }>`
  height: ${({ $h }) => $h}px;
  display: flex;
  gap: 2.2px;
`;

const VWrap = styled.div`
  display: flex;
  gap: 18.4px;
`;

const TipHost = styled.div`
  position: relative;
`;

const Tip = styled.div`
  position: absolute;
  left: 41px;
  top: 13px;
  width: 58px;
  height: 13px;
  background: #fff;
  box-shadow: 0 1px 4px rgba(40, 50, 80, 0.2);
  padding: 2px 4px;
  font-size: 2.6px;
  line-height: 3.2px;
  color: #5f6575;
  white-space: normal;
`;

const VSteps = ({ long }: { long: boolean }) => (
  <VList>
    {[["cur", long ? "步骤的标题名称过长展..." : "标题名", [SUB], 15],
      ["w", "标题名", ["描述的描述性文字显示"], 15],
      ["w", "步骤的标题名最长对齐", ["描述的描述性文字一来", "最后不下折，换行"], 17],
      ["w", "步骤的标题名最长...", ["描述的描述性文字显示"], 15]].map(([s, t, subs, h], i) => (
      <VItem key={i} $h={h as number}>
        <StepCircle $s={s as string}>{i + 1}</StepCircle>
        <StepBody>
          <StepHead $c={tone(s as string)}>{t as string}</StepHead>
          {(subs as string[]).map((l) => <StepSub key={l} $c={s === "cur" ? "#6a7080" : "#c0c4cd"}>{l}</StepSub>)}
        </StepBody>
      </VItem>
    ))}
  </VList>
);

const StepsSheet = () => (
  <>
    <Head t="步骤条 / Steps" d="引导用户按照流程完成任务的导航条" />
    <Title $mt={28}>Type / 类型</Title>
    <StateLine label="当前状态" s="cur" t="当前步骤名称" mt={11} />
    <StateLine label="未进度" s="w" t="未到步骤名称" />
    <StateLine label="已完成" s="done" t="已完成步骤名称" />
    <StateLine label="失败" s="err" t="错误状态的步骤名称" />
    <StepLine $h={15.5}><span>连接线_已完成</span><ConnAlone $on /></StepLine>
    <StepLine $h={15}><span>连接线_未完成</span><ConnAlone $on={false} /></StepLine>
    <StepGroup $mt={6}>
      <GroupLabel $top={6.5}>只有标题_居中</GroupLabel>
      <StepStack $gap={11}>
        <StepsRow h={18} items={makeSteps(["cur", "w", "w"], false)} />
        <StepsRow h={18} items={makeSteps(["done", "cur", "w"], false)} />
        <StepsRow h={18} items={makeSteps(["done", "err", "w"], false)} />
        <StepsRow h={21.5} items={[{ s: "done", t: "标题名超长文字的时候", w: 78, on: true }, { s: "done", t: "标题名", on: false }, { s: "cur", t: "标题名" }]} />
      </StepStack>
    </StepGroup>
    <StepGroup $mt={19}>
      <GroupLabel $top={8}>带有描述文字_居中</GroupLabel>
      <StepStack $gap={8}>
        <StepsRow h={21} items={makeSteps(["cur", "w", "w"], true)} />
        <StepsRow h={21} items={makeSteps(["done", "cur", "w"], true)} />
        <StepsRow h={21} items={makeSteps(["done", "err", "w"], true)} />
        <StepsRow h={21.5} items={makeSteps(["done", "done", "cur"], true)} />
      </StepStack>
    </StepGroup>
    <StepGroup $mt={19}>
      <GroupLabel $top={8}>带有描述文字,描述文字过长_居中</GroupLabel>
      <StepStack $gap={7.6}>
        <StepsRow h={21.5} items={[{ s: "cur", t: "标题名", sub: SUB, w: 59 }, { s: "w", t: "标题名最长的对齐样式", sub: "描述的描述性文字，一行\n显示不下后，换行显示", w: 78 }, { s: "w", t: "标题名", sub: SUB }]} />
      </StepStack>
    </StepGroup>
    <StepGroup $mt={7.4}>
      <GroupLabel $top={8}>带有描述文字_居左</GroupLabel>
      <StepStack $gap={7}><StepsRow h={21.5} j="flex-start" items={makeSteps(["cur", "w", "w"], true)} /></StepStack>
    </StepGroup>
    <StepGroup $mt={7.4}>
      <GroupLabel $top={8}>带有描述文字_居右</GroupLabel>
      <StepStack $gap={7}><StepsRow h={21} j="flex-end" items={makeSteps(["cur", "w", "w"], true)} /></StepStack>
    </StepGroup>
    <StepGroup $mt={20}>
      <GroupLabel $top={0}>垂直方向步骤条</GroupLabel>
      <VWrap>
        <VSteps long={false} />
        <TipHost>
          <VSteps long />
          <Tip>步骤的标题名称过长于下时是将缩显示提示</Tip>
        </TipHost>
      </VWrap>
    </StepGroup>
  </>
);

/* 11 radio */
const RadioRow = styled.div<{ $h: number; $mt?: number; $cols?: string }>`
  height: ${({ $h }) => $h}px;
  margin-top: ${({ $mt }) => $mt ?? 0}px;
  display: grid;
  grid-template-columns: ${({ $cols }) => $cols ?? "39px repeat(6, 62.6px)"};
  align-items: center;
  font-size: 2.7px;
  color: #8f95a3;
  white-space: nowrap;
`;

const Opt = styled.span<{ $c?: string; $gap?: number }>`
  display: inline-flex;
  align-items: center;
  gap: 1.8px;
  margin-right: ${({ $gap }) => $gap ?? 0}px;
  font-size: 2.9px;
  color: ${({ $c }) => $c ?? "#6a7080"};
  small { font-size: 2.6px; color: #b4b9c4; margin-left: 1px; }
`;

const Rad = styled.i<{ $s: string; $size?: number; $ml?: number; $mr?: number }>`
  flex: none;
  margin-left: ${({ $ml }) => $ml ?? 0}px;
  margin-right: ${({ $mr }) => $mr ?? 0}px;
  width: ${({ $size }) => $size ?? 3.4}px;
  height: ${({ $size }) => $size ?? 3.4}px;
  border-radius: 50%;
  background: #fff;
  box-shadow: ${({ $s, $size }) => ($s === "on" ? `inset 0 0 0 ${($size ?? 3.4) * 0.32}px ${BLUE}` : `inset 0 0 0 ${($size ?? 3.4) * 0.1}px ${$s === "hover" ? BLUE : "#dcdfe6"}`)};
`;

const Seg = styled.div`
  display: inline-flex;
  width: 54.4px;
  height: 7.5px;
`;

const SegCell = styled.span<{ $bg?: string; $fg?: string; $bd?: string }>`
  flex: 1;
  font-size: 2.9px;
  line-height: 7.5px;
  text-align: center;
  color: ${({ $fg }) => $fg ?? "#6a7080"};
  background: ${({ $bg }) => $bg ?? "#fff"};
  box-shadow: inset 0 0 0 0.4px ${({ $bd }) => $bd ?? "#dcdfe6"};
`;

const RCard = styled.div<{ $s: string; $w?: number; $h?: number }>`
  width: ${({ $w }) => $w ?? 53.4}px;
  height: ${({ $h }) => $h ?? 15}px;
  padding: 2.4px 3px;
  display: flex;
  gap: 1.8px;
  background: ${({ $s }) => ($s === "dis" ? DIS : "#fff")};
  box-shadow: inset 0 0 0 0.4px ${({ $s }) => ($s === "on" || $s === "hover" ? BLUE_H : $s === "dis" ? DIS : "#dcdfe6")};
  font-size: 2.9px;
  line-height: 4px;
  color: ${({ $s }) => ($s === "dis" ? "#c0c4cd" : "#6a7080")};
  flex: none;
  small { display: block; font-size: 2.6px; line-height: 3.6px; color: ${({ $s }) => ($s === "dis" ? "#c8ccd4" : "#a3a8b3")}; white-space: pre; }
`;

const CardRow = styled.div<{ $gap?: number }>`
  display: flex;
  gap: ${({ $gap }) => $gap ?? 4.4}px;
`;

const Radio3 = ({ cells }: { cells: { t: string; bg?: string; fg?: string; bd?: string }[] }) => (
  <Seg>{cells.map((c, i) => <SegCell key={i} $bg={c.bg} $fg={c.fg} $bd={c.bd}>{c.t}</SegCell>)}</Seg>
);

const OPT = ["选项一", "选项二", "选项三"];
const seg = (first: any, third?: any) => OPT.map((t, i) => (i === 0 ? { t, ...first } : i === 2 && third ? { t, ...third } : { t }));
const disSeg = { bg: DIS, fg: "#c8ccd4", bd: DIS };

const BigOpts = styled.div`
  display: flex;
  align-items: center;
  font-size: 6.7px;
  color: #6a7080;
  white-space: nowrap;
  small { font-size: 5.8px; color: #a3a8b3; margin-left: 1px; }
`;

const BigSeg = styled.div`
  display: flex;
  width: 108.5px;
  height: 15px;
`;

const BigCell = styled.span<{ $k: string }>`
  flex: 1;
  font-size: 6.7px;
  line-height: 15px;
  text-align: center;
  color: ${({ $k }) => ($k === "on" ? BLUE_H : $k === "dis" ? "#c8ccd4" : "#6a7080")};
  background: ${({ $k }) => ($k === "dis" ? DIS : "#fff")};
  box-shadow: inset 0 0 0 0.6px ${({ $k }) => ($k === "on" ? BLUE : "#dcdfe6")};
`;

const BigCard = styled.div<{ $w: number; $h: number }>`
  width: ${({ $w }) => $w}px;
  height: ${({ $h }) => $h}px;
  flex: none;
  background: #fff;
  box-shadow: inset 0 0 0 0.5px #e0e2e7;
  display: flex;
  gap: 4px;
  padding: 3px 6px;
  font-size: 6.7px;
  line-height: 9px;
  color: #6a7080;
  white-space: pre;
  small { display: block; font-size: 5.8px; line-height: 7.4px; color: #a3a8b3; }
`;

const RADIO_COLS = "40px 223.5px 1fr";

const RadioSheet = () => (
  <>
    <Head t="单选 / Radio" d="用于在多个备选项中选中单个状态。Radio选项默认可见，方便用户在比较中选择，因此选项不宜过多，若选项过多，建议使用 Select 选择器。" />
    <Title $mt={28}>Type / 类型</Title>
    <RadioRow $h={5} $mt={13.5}>
      <span />
      {["Nor / 常态", "Hover / 悬停", "Click / 点击", "Selected / 已选择", "Disabled / 禁用-未选中", "Disabled-Selected / 禁用-已选中"].map((h) => <HeadCell key={h}>{h}</HeadCell>)}
    </RadioRow>
    <RadioRow $h={18} $mt={6}>
      <span>无文字</span>
      {["off", "hover", "hover", "on", "off", "off"].map((s, i) => <span key={i}><Opt><Rad $s={s} /></Opt></span>)}
    </RadioRow>
    <RadioRow $h={18}>
      <span>有文字</span>
      {["off", "hover", "hover", "on", "off", "off"].map((s, i) => <span key={i}><Opt $c={i > 3 ? "#c8ccd4" : undefined}><Rad $s={s} />选项一</Opt></span>)}
    </RadioRow>
    <RadioRow $h={19}>
      <span>有描述文字</span>
      {["off", "hover", "hover", "on", "off", "off"].map((s, i) => <span key={i}><Opt $c={i > 3 ? "#c8ccd4" : undefined}><Rad $s={s} />选项一<small>(描述性文字)</small></Opt></span>)}
    </RadioRow>
    <RadioRow $h={21}>
      <span>按钮样式-描边</span>
      <Radio3 cells={seg({})} />
      <Radio3 cells={seg({ fg: BLUE_H, bd: BLUE_H })} />
      <span />
      <Radio3 cells={seg({ fg: BLUE, bd: BLUE })} />
      <Radio3 cells={seg({ fg: BLUE, bd: BLUE }, disSeg)} />
    </RadioRow>
    <RadioRow $h={21}>
      <span>按钮样式-填充</span>
      <Radio3 cells={seg({})} />
      <Radio3 cells={seg({ fg: BLUE_H, bd: BLUE_H })} />
      <span />
      <Radio3 cells={seg({ fg: "#fff", bg: BLUE, bd: BLUE })} />
      <Radio3 cells={seg({ fg: "#fff", bg: BLUE, bd: BLUE }, disSeg)} />
    </RadioRow>
    <RadioRow $h={30}>
      <span>卡片式</span>
      {[["off", "off"], ["hover", "hover"], null, ["on", "on"], ["off", "dis"], ["off", "dis"]].map((c, i) => (c ? (
        <RCard key={i} $s={c[1]}><Rad $s={c[0]} /><div>选项一<small>关于选项一的简单描述</small></div></RCard>
      ) : <span key={i} />))}
    </RadioRow>
    <Title $mt={21.3}>Group / 组合</Title>
    <RadioRow $h={17} $mt={6.8} $cols="39px 1fr">
      <span>有文字</span>
      <div>
        <Opt $gap={11}><Rad $s="off" />选项一</Opt><Opt $gap={11}><Rad $s="off" />选项二</Opt><Opt $gap={11}><Rad $s="on" />选项三</Opt><Opt $c="#c8ccd4"><Rad $s="off" />选项四</Opt>
      </div>
    </RadioRow>
    <RadioRow $h={16} $cols="39px 1fr">
      <span>有描述文字</span>
      <div>
        <Opt $gap={8.5}><Rad $s="off" />选项一<small>(描述性文字)</small></Opt><Opt $gap={8.5}><Rad $s="off" />选项二</Opt><Opt $gap={8.5}><Rad $s="on" />选项三<small>(描述性文字)</small></Opt><Opt $c="#c8ccd4"><Rad $s="off" />选项四<small>(描述性文字)</small></Opt>
      </div>
    </RadioRow>
    <RadioRow $h={30} $cols="39px 1fr">
      <span>卡片式</span>
      <CardRow>
        <RCard $s="on"><Rad $s="on" /><div>选项一<small>关于选项一的简单描述</small></div></RCard>
        <RCard $s="off"><Rad $s="off" /><div>选项二<small>关于选项一的简单描述</small></div></RCard>
        <RCard $s="off"><Rad $s="off" /><div>选项三<small>关于选项三的简单描述最长时候</small></div></RCard>
        <RCard $s="dis"><Rad $s="off" /><div>选项一<small>关于选项一的简单描述</small></div></RCard>
      </CardRow>
    </RadioRow>
    <RadioRow $h={31} $cols="39px 1fr">
      <span>卡片式-多行</span>
      <CardRow>
        <RCard $s="on" $h={20}><Rad $s="on" /><div>选项一<small>关于选项一的简单描述</small></div></RCard>
        <RCard $s="off" $h={20}><Rad $s="off" /><div>选项二<small>关于选项一的简单描述</small></div></RCard>
        <RCard $s="off" $h={20}><Rad $s="off" /><div>选项三<small>{"关于选项三的简单描述最长时候\n显示不下换行显示"}</small></div></RCard>
        <RCard $s="dis" $h={20}><Rad $s="off" /><div>选项一<small>关于选项一的简单描述</small></div></RCard>
      </CardRow>
    </RadioRow>
    <Title $mt={20.5}>扩展样式</Title>
    <RadioRow $h={14} $mt={8} $cols="32px 1fr">
      <Opt><Rad $s="off" />选项一<small>(?)</small></Opt>
      <Opt><Rad $s="off" />选项二<small>输入框</small></Opt>
    </RadioRow>
    <SpecPanel $mt={26} $h={257.5} $pad={9}>
      <SpecTitle>尺寸说明 <small>(为按照2x 2倍呈现)</small></SpecTitle>
      <SpecRow $h={25} $cols={RADIO_COLS} $mt={8}>
        <div>有文字/描述</div>
        <Annot>
          <BigOpts>
            <Rad $s="on" $size={8} $mr={4} />选项一<Rad $s="off" $size={7.4} $ml={18} $mr={4} />选项一<small>(描述性文字)</small><Rad $s="off" $size={7.4} $ml={18} $mr={4} />选项三
          </BigOpts>
          <Tag $x={5} $y={-6}>8px</Tag>
          <Tag $x={36} $y={1}>16px</Tag>
          <Tag $x={81} $y={1}>16px</Tag>
          <Tag $x={-1} $y={7} $o>16px</Tag>
        </Annot>
        <SpecText>单选 icon 大小 16px、icon 与文字上间间距 8px；选项与选项之间间距 40px<br />选项文字为 14px、FontColor01；描述文字 12px、FontColor03</SpecText>
      </SpecRow>
      <SpecRow $h={40} $cols={RADIO_COLS}>
        <div>按钮样式-描边</div>
        <Annot $w={108.5}>
          <BigSeg><BigCell $k="on">选项一</BigCell><BigCell $k="off">选项二</BigCell><BigCell $k="dis">选项三</BigCell></BigSeg>
          <Tag $x={0} $y={11}>16px</Tag>
          <Tag $x={28} $y={11}>16px</Tag>
        </Annot>
        <SpecText>按钮最小宽度为 64px，当文字过多时，文字与按钮之间的间距 16px，按钮高度通好一致，但特别地足下<br />可以不一致；选项文字为 14px、FontColor01</SpecText>
      </SpecRow>
      <SpecRow $h={56} $cols={RADIO_COLS}>
        <div>卡片式</div>
        <Annot>
          <CardRow $gap={7}>
            <BigCard $w={108} $h={31}><Rad $s="off" $size={8} /><div>选项二<small>关于选项一的简单描述</small></div></BigCard>
            <BigCard $w={108} $h={31}><Rad $s="off" $size={8} /><div>选项三<small>关于选项三的简单描述最长时候</small></div></BigCard>
          </CardRow>
          <DimLine $x={0} $y={-4} $w={108} />
          <Tag $x={48} $y={-6} $o>320px</Tag>
          <Tag $x={-2} $y={3}>12px</Tag>
          <Tag $x={11} $y={3}>4px</Tag>
          <Tag $x={29} $y={1}>12px</Tag>
          <Tag $x={29} $y={26}>12px</Tag>
          <Tag $x={98} $y={13} $o>64px</Tag>
          <Tag $x={107} $y={4}>8px</Tag>
          <Tag $x={198} $y={14}>12px</Tag>
        </Annot>
      </SpecRow>
      <SpecRow $h={64} $cols={RADIO_COLS}>
        <div>卡片式-多行</div>
        <Annot>
          <BigCard $w={108} $h={39}><Rad $s="off" $size={8} /><div>选项三<small>{"关于选项三的简单描述最长时候\n显示不下换行显示"}</small></div></BigCard>
          <Tag $x={-2} $y={3}>12px</Tag>
          <Tag $x={11} $y={3}>4px</Tag>
          <Tag $x={29} $y={-1}>12px</Tag>
          <Tag $x={100} $y={11}>12px</Tag>
          <Tag $x={47} $y={34}>12px</Tag>
        </Annot>
        <SpecText>单选 icon 与选项文字为一体，距离线框左边距和上边距为 12px；<br />描述文字在选项文字上下间距 4px，描述文字最长与线框右边距 12px；<br />宽度根据业务需求确定的宽比，选择卡片型，最小宽度为 224px，全上为 240px，200px 等高<br />高度根据业务需求确定的宽比，上 padding:12px，下 padding:16px；<br />每个卡片卡片之间间距 16px；<br />选项文字 14px、FontColor01；描述文字 12px、FontColor03，间距为 2;</SpecText>
      </SpecRow>
    </SpecPanel>
  </>
);

/* toolbar icons */
const G = "#6c6a6d";
const G2 = "#575558";
const L = "#bcbcbc";
const IconCanvasView = () => (
  <svg viewBox="0 0 36 28">
    <rect x="2" y="1" width="32" height="26" rx="4" fill="#7c7a7c" />
    <path d="M2 11V4a3 3 0 0 1 3-3h8M34 17v7a3 3 0 0 1-3 3h-8" fill="none" stroke="#fff" strokeWidth="2.4" />
  </svg>
);
const IconGrid = () => (
  <svg viewBox="0 0 35 27"><g fill={L}><rect width="16" height="12.5" rx="4" /><rect x="19" width="16" height="12.5" rx="4" /><rect y="14.5" width="16" height="12.5" rx="4" /><rect x="19" y="14.5" width="16" height="12.5" rx="4" /></g></svg>
);
const IconPlus = () => (
  <svg viewBox="0 0 27 27"><path d="M13.5 0v27M0 13.5h27" stroke={L} strokeWidth="2.2" /></svg>
);
const Chev = ({ c = L }: { c?: string }) => (
  <svg viewBox="0 0 16 10"><path d="M2 1.5l6 6.5 6-6.5" fill="none" stroke={c} strokeWidth="2.2" /></svg>
);
const IconSymbol = () => (
  <svg viewBox="0 0 38 38"><path fillRule="evenodd" fill={G} d="M14 1h10c4 0 6 1 8 4l4 7c2 4 2 10 0 14l-4 7c-2 3-4 4-8 4H14c-4 0-6-1-8-4l-4-7c-2-4-2-10 0-14l4-7c2-3 4-4 8-4zm5 6l-9 12 9 12 9-12z" /></svg>
);
const IconAlignUp = () => (
  <svg viewBox="0 0 38 37" fill={G}><path d="M19 0l4.5 9h-3.4v18h-2.2V9h-3.4z" /><rect y="16" width="15" height="8" rx="1.5" /><rect x="23" y="16" width="15" height="8" rx="1.5" /><rect y="28" width="38" height="9" rx="2" /></svg>
);
const IconAlignDown = () => (
  <svg viewBox="0 0 40 37" fill={G}><rect width="40" height="9" rx="2" /><rect y="13" width="17" height="8" rx="1.5" /><rect x="23" y="13" width="17" height="8" rx="1.5" /><path d="M20 37l-4.5-9h3.4V9h2.2v19h3.4z" /></svg>
);
const IconGroup = () => (
  <svg viewBox="0 0 38 37" fill={G2}><path d="M5 5h28M5 32h28M5 5v27M33 5v27" stroke={G2} strokeWidth="1.5" /><path d="M6 3h26v4H6zM6 30h26v4H6z" /><circle cx="4" cy="4" r="3.5" /><circle cx="34" cy="4" r="3.5" /><circle cx="4" cy="33" r="3.5" /><circle cx="34" cy="33" r="3.5" /><rect x="11" y="9" width="13" height="15" rx="3" /></svg>
);
const IconUngroup = () => (
  <svg viewBox="0 0 36 37" fill={G2}><circle cx="6" cy="4" r="3.5" /><circle cx="24" cy="4" r="3.5" /><circle cx="6" cy="19" r="3.5" /><circle cx="31" cy="19" r="3.5" /><circle cx="13" cy="33" r="3.5" /><circle cx="31" cy="33" r="3.5" /><rect x="7" y="3" width="17" height="14" rx="3" /><rect x="14" y="18" width="17" height="14" rx="3" /></svg>
);
const IconEdit = () => (
  <svg viewBox="0 0 36 37"><path d="M24 1C12 1 2 9 2 20s7 16 14 16c9 0 18-10 18-22 0-6-4-13-10-13z" fill={G2} /><path d="M4 34L32 5" stroke="#373538" strokeWidth="1.6" /><circle cx="26" cy="11" r="3" fill={G2} stroke="#373538" strokeWidth="1.2" /><circle cx="14" cy="23" r="3" fill={G2} stroke="#373538" strokeWidth="1.2" /></svg>
);
const IconResize = () => (
  <svg viewBox="0 0 36 37" fill={L}><path d="M31 4v30" stroke={L} strokeWidth="1.6" /><rect x="0" y="1" width="36" height="5" rx="2.5" /><circle cx="32" cy="4" r="3.4" /><circle cx="32" cy="33" r="3.4" /><rect x="0" y="11" width="25" height="26" rx="6" /></svg>
);
const Combine = ({ k }: { k: number }) => (
  <svg viewBox="0 0 34 36">
    <rect x="11" y="0" width="22" height="23" rx="6" fill={k === 0 ? G : k === 1 ? G2 : "none"} stroke={k === 0 ? "none" : G2} strokeWidth={k === 0 ? 0 : 3.4} />
    <rect x="0" y="13" width="22" height="23" rx="6" fill={k === 0 ? G : G2} stroke={k === 0 ? "none" : "#373538"} strokeWidth={k === 0 ? 0 : 1.6} />
    {k > 1 && <rect x="11" y="13" width="11" height="10" rx="2" fill={k === 2 ? "#6c6a6d" : "#373538"} />}
  </svg>
);
const IconLock = () => (
  <svg viewBox="0 0 15 17"><path d="M3 7V5a4.5 4.5 0 0 1 9 0v2" fill="none" stroke="#8e8e8e" strokeWidth="2" /><rect y="6.5" width="15" height="10.5" rx="1.5" fill="#8e8e8e" /></svg>
);
const IconPlay = () => (
  <svg viewBox="0 0 27 30"><path d="M2 1.5c0-1.4 1-1.8 2.2-1.1l21 12.6c1.3.8 1.3 3.2 0 4L4.2 29.6C3 30.3 2 29.9 2 28.5z" fill={L} /></svg>
);
const IconCloud = () => (
  <svg viewBox="0 0 44 28"><path d="M11 28C4 28 0 24 0 19c0-5 4-9 9-9 2-6 7-10 13-10 7 0 12 5 13 11 5 0 9 3 9 8 0 5-4 9-9 9z" fill={L} /></svg>
);
const IconBell = () => (
  <svg viewBox="0 0 33 37"><path d="M16.5 0c2 0 3 1.2 3 3 6 1.5 8 6 8 12 0 6 2 9 5.5 13v2H0v-2c3.5-4 5.5-7 5.5-13 0-6 2-10.500 8-12 0-1.800 1-3 3-3z" fill={L} /><path d="M12.5 32h8c0 3-2 5-4 5s-4-2-4-5z" fill={L} /></svg>
);

/* rulers */
const rng = (a: number, n: number) => Array.from({ length: n }, (_, i) => a + i * 830);
const fmt = (v: number) => v.toLocaleString("en-US");

type Board = { name: string; x: number; top: number; h: number; w?: number; body?: React.ReactNode };
const boards: Board[] = [
  { name: "01_G_通用_Color颜色", x: 136, top: 227, h: 1430, body: <ColorSheet /> },
  { name: "02_G_通用_Font字体", x: 704, top: 227, h: 670, body: <FontSheet /> },
  { name: "03_G_通用_Radius圆角", x: 704, top: 970, h: 149, body: <RadiusSheet /> },
  { name: "04_G_通用_Space间距", x: 704, top: 1192, h: 365, body: <SpaceSheet /> },
  { name: "05_G_通用_Button按钮", x: 1272, top: 227, h: 1116, body: <ButtonSheet /> },
  { name: "06_G_通用_Scrollbar滚动条", x: 1839, top: 227, h: 396, body: <ScrollSheet /> },
  { name: "07_G_通用_Icon图标", x: 1839, top: 696, h: 191, body: <IconSheet /> },
  { name: "08_G_通用_Shadow投影", x: 1839, top: 959, h: 204, body: <ShadowSheet /> },
  { name: "09_N_导航_Breadcrumb面包屑", x: 1839, top: 1236, h: 191, body: <CrumbSheet /> },
  { name: "10_N_导航_Steps步骤条", x: 2407, top: 227, h: 705, body: <StepsSheet /> },
  { name: "11_DE_数据输入_Radio单选", x: 2407, top: 1004, h: 761, body: <RadioSheet /> },
  { name: "12_DE_数据输入_Checkbox多选", x: 136, top: 1861, h: 200, body: <Head t="多选 / CheckBox" d="" /> },
  { name: "13_DE_数据输入_Switch开关", x: 704, top: 1861, h: 200, body: <Head t="开关 / Switch" d="" /> },
  { name: "14_DE_数据输入_Input输入框", x: 1272, top: 1861, h: 200, w: 639, body: <Head t="输入框 / Input" d="" /> },
  { name: "15_DE_数据输入_Select选择器", x: 1960, top: 1861, h: 200, w: 640, body: <Head t="选择器 / Select" d="" /> },
];

export default function App() {
  return (
    <Win>
      <Global />
      <Toolbar>
        <ActiveBtn><IconCanvasView /></ActiveBtn>
        <Tool $ml={26} $w={35}><IconGrid /></Tool>
        <Tool $ml={67} $w={27}><IconPlus /></Tool>
        <Tool $ml={20} $w={15}><Chev /></Tool>
        <DocName>
          <DocTitle>SEGI 设计系统规范 v1.0.4.sketch</DocTitle>
          <DocSub>本地文档</DocSub>
        </DocName>
        <Tool $ml={0} $w={38}><IconSymbol /></Tool>
        <Tool $ml={77} $w={38}><IconAlignUp /></Tool>
        <Sep $ml={24} />
        <Tool $ml={23} $w={40}><IconAlignDown /></Tool>
        <Tool $ml={61} $w={38}><IconGroup /></Tool>
        <Sep $ml={24} />
        <Tool $ml={24} $w={36}><IconUngroup /></Tool>
        <Tool $ml={81} $w={36}><IconEdit /></Tool>
        <Tool $ml={59} $w={36}><IconResize /></Tool>
        <Tool $ml={14} $w={16}><Chev /></Tool>
        <Tool $ml={72} $w={33}><Combine k={0} /></Tool>
        <Sep $ml={22} />
        <Tool $ml={26} $w={34}><Combine k={1} /></Tool>
        <Sep $ml={27} />
        <Tool $ml={26} $w={34}><Combine k={2} /></Tool>
        <Sep $ml={27} />
        <Tool $ml={21} $w={34}><Combine k={3} /></Tool>
        <ZoomBox>12%<Tool $ml={0} $w={14}><Chev c="#a8a8a8" /></Tool></ZoomBox>
        <Tool $ml={63} $w={27}><IconPlay /></Tool>
        <Tool $ml={59} $w={44}><IconCloud /></Tool>
        <Tool $ml={51} $w={33}><IconBell /><Badge>1</Badge></Tool>
      </Toolbar>
      <RulerRow>
        <Corner><IconLock /></Corner>
        <TopTrack>
          {rng(-1660, 16).map((v, i) => <TopSeg key={v} $first={i === 0}>{i === 0 ? "" : fmt(v)}</TopSeg>)}
        </TopTrack>
      </RulerRow>
      <Body>
        <LeftTrack>
          {rng(-1660, 10).map((v, i) => <LeftSeg key={v} $first={i === 0}><span>{i === 9 ? "" : fmt(v)}</span></LeftSeg>)}
        </LeftTrack>
        <Canvas>
          {boards.map((b) => (
            <Frame key={b.name} $x={b.x} $top={b.top} $w={b.w ?? 519.5}>
              <BoardName>{b.name}</BoardName>
              <Sheet $h={b.h}>{b.body}</Sheet>
            </Frame>
          ))}
        </Canvas>
      </Body>
    </Win>
  );
}
